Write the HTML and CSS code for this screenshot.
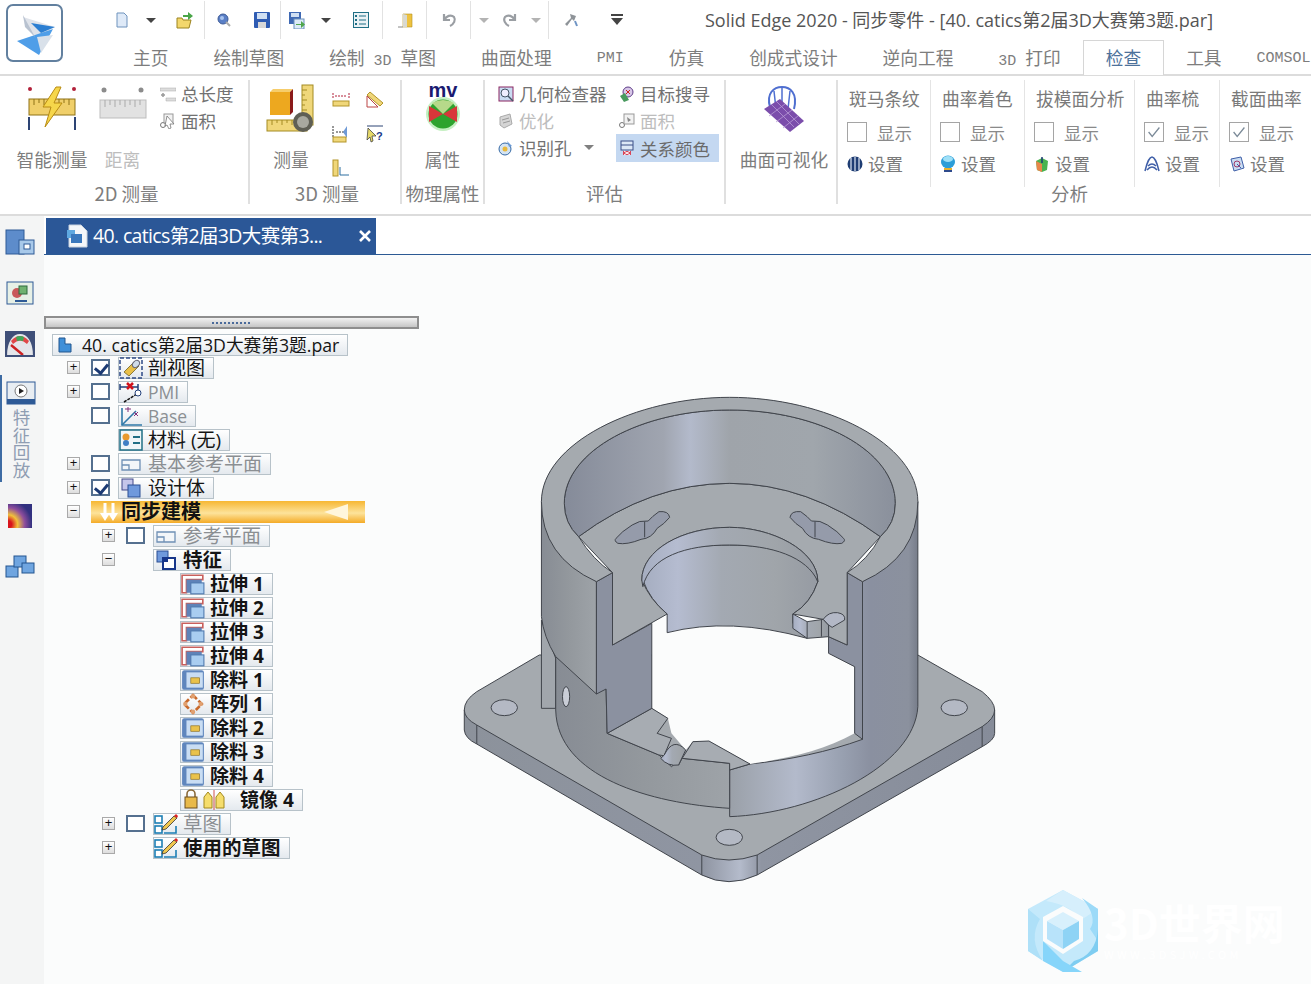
FILE: index.html
```html
<!DOCTYPE html>
<html lang="zh">
<head>
<meta charset="utf-8">
<title>Solid Edge 2020</title>
<link rel="stylesheet" href="styles.css">
</head>
<body>
<svg class="defs" width="0" height="0">
  <defs>
    <symbol id="i-doc" viewBox="0 0 16 16"><path d="M3 1h7l3 3v11H3z" fill="#dfeaf8" stroke="#6f93bd"/></symbol>
    <symbol id="i-ext" viewBox="0 0 22 20"><path d="M1 18V2h19v4H5v12z" fill="#fff" stroke="#c9605c" stroke-width="1.5"/><rect x="5" y="6" width="14" height="12" fill="#5f83b8"/><rect x="9" y="9" width="12" height="10" fill="#a9cdf0" stroke="#4f79ae"/></symbol>
    <symbol id="i-cut" viewBox="0 0 22 20"><rect x="1" y="1" width="20" height="18" rx="2" fill="#5f86bd"/><rect x="5" y="3" width="15" height="14" fill="#c9ddf3"/><rect x="9" y="8" width="8" height="5" fill="#e9c24b" stroke="#8a6d1c" stroke-width=".6"/></symbol>
    <symbol id="i-pat" viewBox="0 0 20 20"><path d="M10 2l8 8-8 8-8-8z" fill="none" stroke="#c96a2d" stroke-width="2.4" stroke-dasharray="5 2"/><circle cx="10" cy="3" r="2" fill="#e0a070"/><circle cx="10" cy="17" r="2" fill="#e0a070"/><circle cx="3" cy="10" r="2" fill="#e0a070"/><circle cx="17" cy="10" r="2" fill="#e0a070"/></symbol>
    <symbol id="i-sketch" viewBox="0 0 24 20"><rect x="1" y="2" width="7" height="7" fill="#fff" stroke="#1d7fb5" stroke-width="1.6"/><rect x="1" y="12" width="7" height="7" fill="#fff" stroke="#1d7fb5" stroke-width="1.6"/><path d="M10 19h12v-7" fill="none" stroke="#1d7fb5" stroke-width="1.6"/><path d="M9 13L20 2l3 2-11 11-4 1z" fill="#efc64e" stroke="#333" stroke-width=".8"/><path d="M20 2l3 2 1-2-2-2z" fill="#d22"/></symbol>
    <symbol id="i-plane" viewBox="0 0 24 20"><path d="M3 6h18v10H3zM3 11h7v5" fill="#f3f6f9" stroke="#6f90b5" stroke-width="1.3"/></symbol>
    <symbol id="i-body" viewBox="0 0 24 20"><rect x="3" y="1" width="11" height="11" fill="#c5c6ea" stroke="#434b8a"/><rect x="9" y="7" width="12" height="12" fill="#6f99dc" stroke="#2a4f94"/></symbol>
    <symbol id="i-tick" viewBox="0 0 20 20"><path d="M4 10l4 5 8-10" fill="none" stroke="#7b8a98" stroke-width="1.4"/></symbol>
  </defs>
</svg>

<div class="app">
  <header class="top">
    <button class="app-btn" aria-label="应用程序">
      <svg width="44" height="44" viewBox="0 0 44 44"><path d="M10 6l12 22 20-12z" fill="#dfe3ea"/><path d="M4 30l36-12-14 26z" fill="#4f9ee8"/><path d="M18 12l24 4-14 6z" fill="#2c7fd2"/><path d="M24 26l16-2-12 18z" fill="#d9e1ea"/><path d="M10 4l12 22-10-10z" fill="#b8c2d0"/></svg>
    </button>
    <div class="top-right">
      <div class="qat">
        <span class="q w30"><svg width="16" height="18"><use href="#i-doc"/></svg></span>
        <span class="q w28"><i class="drop"></i></span>
        <span class="q w40 sep"><svg width="18" height="18" viewBox="0 0 18 18"><path d="M1 7h5l1 2h8l-2 8H1z" fill="#f3d76c" stroke="#9c8420"/><path d="M7 4h5V1l5 4-5 4V6H7z" fill="#49a548"/></svg></span>
        <span class="q w38"><svg width="14" height="14" viewBox="0 0 14 14"><circle cx="6" cy="6" r="5" fill="#5a7fc6" stroke="#3c5a96"/><circle cx="5" cy="5" r="2" fill="#a8c4ef"/><path d="M9 9l4 4" stroke="#aaa" stroke-width="2"/></svg></span>
        <span class="q w38 sep"><svg width="16" height="16" viewBox="0 0 16 16"><rect width="16" height="16" rx="1" fill="#2f5cb3"/><rect x="3" y="1" width="10" height="6" fill="#cfdff3"/><rect x="4" y="10" width="8" height="6" fill="#d8d8d8"/></svg></span>
        <span class="q w32"><svg width="17" height="17" viewBox="0 0 17 17"><rect width="12" height="12" fill="#3f69b4"/><rect x="2" y="1" width="8" height="4" fill="#cfdff3"/><rect x="5" y="7" width="10" height="10" fill="#dceaf7" stroke="#6a8fbc"/><path d="M7 12h5V9l4 3.5-4 3.500V13H7z" fill="#4fa64c"/></svg></span>
        <span class="q w26"><i class="drop"></i></span>
        <span class="q w44 sep"><svg width="16" height="16" viewBox="0 0 16 16"><rect x=".5" y=".5" width="15" height="15" fill="#eaf2f5" stroke="#1f6f85"/><path d="M6 4h7M6 8h7M6 12h7" stroke="#1f6f85" stroke-width="1.2"/><path d="M2 3h2v2H2zM2 7h2v2H2zM2 11h2v2H2z" fill="#1f6f85"/></svg></span>
        <span class="q w44 sep"><svg width="16" height="16" viewBox="0 0 16 16"><path d="M1 15h5" stroke="#888"/><path d="M6 2h9v13H6z" fill="#eec23f" stroke="#b39024" stroke-width=".6"/><path d="M6 2l4 1v12H6z" fill="#d9d9d0"/></svg></span>
        <span class="q w44 sep"><svg width="16" height="16" viewBox="0 0 16 16"><path d="M3 2v6h6M3.500 8C5 4 10 2 13 5c2 3 0 7-4 9" fill="none" stroke="#9a9ea3" stroke-width="2.200"/></svg></span>
        <span class="q w26"><i class="drop pale"></i></span>
        <span class="q w26"><svg width="16" height="16" viewBox="0 0 16 16"><path d="M13 2v6H7M12.500 8C11 4 6 2 3 5c-2 3 0 7 4 9" fill="none" stroke="#9a9ea3" stroke-width="2.200"/></svg></span>
        <span class="q w26 sep"><i class="drop pale"></i></span>
        <span class="q w44"><svg width="16" height="16" viewBox="0 0 16 16"><path d="M7 2l6 2-2 5-2-2-5 7-2-2 6-6z" fill="#8e9398"/><path d="M12 9l2 5" stroke="#6f94c4" stroke-width="2"/></svg></span>
        <span class="q w48"><svg width="14" height="12" viewBox="0 0 14 12"><rect x="1" y="0" width="12" height="2" fill="#444"/><path d="M1 4h12l-6 7z" fill="#444"/></svg></span>
        <h1 class="title">Solid Edge 2020 - 同步零件 - [40. catics第2届3D大赛第3题.par]</h1>
      </div>
      <nav class="tabs">
        <a class="tab">主页</a>
        <a class="tab">绘制草图</a>
        <a class="tab">绘制<span class="m mx">3D</span>草图</a>
        <a class="tab">曲面处理</a>
        <a class="tab mono">PMI</a>
        <a class="tab">仿真</a>
        <a class="tab">创成式设计</a>
        <a class="tab">逆向工程</a>
        <a class="tab"><span class="m mr">3D</span>打印</a>
        <a class="tab active">检查</a>
        <a class="tab">工具</a>
        <a class="tab mono tight">COMSOL</a>
      </nav>
    </div>
  </header>

  <section class="ribbon">
    <div class="group g-2d">
      <div class="group-body">
        <div class="large w78">
          <svg class="big" width="50" height="48" viewBox="0 0 50 48"><circle cx="3" cy="4" r="2" fill="#b2203a"/><circle cx="47" cy="4" r="2" fill="#b2203a"/><rect x="2" y="14" width="46" height="16" fill="#f0cf6a" stroke="#8f7216"/><path d="M7 14v6M12 14v4M17 14v6M22 14v4M32 14v6M37 14v4M42 14v6" stroke="#8f7216"/><path d="M29 2L16 22h8l-6 20 17-24h-8l7-16z" fill="#f6d64a" stroke="#b88b12"/><path d="M2 32v13M48 32v13" stroke="#2d4474" stroke-width="2"/></svg>
          <span class="lbl">智能测量</span>
        </div>
        <div class="large w63 off">
          <svg class="big" width="48" height="48" viewBox="0 0 48 48"><circle cx="5" cy="5" r="2.500" fill="#8c8c8c"/><circle cx="42" cy="5" r="2.500" fill="#8c8c8c"/><rect x="1" y="15" width="46" height="18" fill="#e2e2e2" stroke="#bdbdbd"/><path d="M6 15v7M11 15v5M16 15v7M21 15v5M26 15v7M31 15v5M36 15v7M41 15v5" stroke="#aaa"/></svg>
          <span class="lbl">距离</span>
        </div>
        <div class="smalls s-len off">
          <div class="sm"><svg width="16" height="16" viewBox="0 0 16 16"><path d="M0 2h16v3H0z" fill="#ddd" stroke="#aaa" stroke-width=".5"/><path d="M1 9h4M3 7v4" stroke="#999" stroke-width="1.500"/><path d="M6 12h10v3H6z" fill="#ddd" stroke="#aaa" stroke-width=".5"/></svg>总长度</div>
          <div class="sm"><svg width="16" height="16" viewBox="0 0 16 16"><circle cx="3" cy="12" r="2.500" fill="#fff" stroke="#777"/><rect x="4" y="1" width="9" height="9" fill="#f2f2f2" stroke="#999"/><path d="M7 3l7 8h-4l1 4-2 1-2-4-2 1z" fill="#fff" stroke="#666" stroke-width=".7"/></svg>面积</div>
        </div>
      </div>
      <div class="group-lbl pl5">2D 测量</div>
    </div>

    <div class="group g-3d">
      <div class="group-body">
        <div class="large w70 lp">
          <svg class="big" width="50" height="50" viewBox="0 0 50 50"><rect x="36" y="1" width="11" height="40" fill="#f0d77a" stroke="#a48b22"/><path d="M36 6h5M36 11h3M36 16h5M36 21h3M36 26h5" stroke="#a48b22"/><rect x="1" y="36" width="40" height="11" fill="#f0d77a" stroke="#a48b22"/><path d="M6 36v5M11 36v3M16 36v5M21 36v3M26 36v5" stroke="#a48b22"/><path d="M4 8h20v23H4z" fill="#eda81f"/><path d="M4 8l3-3h20l-3 3z" fill="#f6cd6b"/><path d="M24 8l3-3v23l-3 3z" fill="#8b1a1a"/><circle cx="37" cy="38" r="10" fill="#5f5f55"/><circle cx="37" cy="38" r="6" fill="#a8a89f"/></svg>
          <span class="lbl">测量</span>
        </div>
        <div class="mini-grid">
          <svg width="18" height="18" viewBox="0 0 18 18"><path d="M1 2v5M17 2v5M3 5h12" stroke="#b2203a" stroke-dasharray="2 1"/><rect x="1" y="10" width="16" height="5" fill="#f0d77a" stroke="#b3952a"/></svg>
          <svg width="18" height="18" viewBox="0 0 18 18"><path d="M1 16V5l11 11z" fill="none" stroke="#b44"/><path d="M4 1l13 11-3 3L1 4z" fill="#f0d77a" stroke="#b3952a"/></svg>
          <svg width="18" height="18" viewBox="0 0 18 18"><path d="M1 1v11M4 7h8" stroke="#333" stroke-dasharray="2 1"/><path d="M15 1l-4 6 4 6z" fill="#6f9ad6"/><rect x="1" y="12" width="13" height="5" fill="#f0d77a" stroke="#b3952a"/></svg>
          <svg width="18" height="18" viewBox="0 0 18 18"><path d="M1 1h16" stroke="#2d4474"/><path d="M2 3l8 8-4 0 1 5-2 1-1-5-3 3z" fill="#e5d86a" stroke="#333" stroke-width=".7"/><text x="10" y="15" class="q-mark">?</text></svg>
          <svg width="18" height="18" viewBox="0 0 18 18"><rect x="1" y="1" width="5" height="16" fill="#f0d77a" stroke="#b3952a"/><path d="M8 8v8h9" fill="none" stroke="#2d6fa0"/></svg>
        </div>
      </div>
      <div class="group-lbl pl4">3D 测量</div>
    </div>

    <div class="group g-phy">
      <div class="group-body center">
        <div class="large">
          <svg class="big mvb" width="52" height="53" viewBox="0 -5 52 53"><text x="26" y="13" class="mv">mv</text><circle cx="26" cy="30" r="17" fill="#9fe59a" opacity=".6"/><circle cx="26" cy="30" r="14.500" fill="#2ea32e"/><path d="M12 22l14 8-14 8zM40 22L26 30l14 8z" fill="#d8373a"/><path d="M15 19l11 11 11-11q-11-6-22 0z" fill="#b6d98a"/></svg>
          <span class="lbl">属性</span>
        </div>
      </div>
      <div class="group-lbl">物理属性</div>
    </div>

    <div class="group g-eval">
      <div class="group-body">
        <div class="smalls s-a">
          <div class="sm"><svg width="16" height="16" viewBox="0 0 16 16"><rect x="1" y="1" width="14" height="14" fill="#c9dcf2" stroke="#8a2560"/><circle cx="7" cy="7" r="4" fill="#eef" stroke="#456"/><path d="M10 10l5 5" stroke="#456" stroke-width="1.500"/></svg>几何检查器</div>
          <div class="sm off"><svg width="16" height="16" viewBox="0 0 16 16"><path d="M2 4l10-3 2 10-8 4-4-3z" fill="#d5d5d5" stroke="#aaa"/><path d="M4 7l7-2M5 10l7-2" stroke="#999"/></svg>优化</div>
          <div class="sm"><svg width="16" height="16" viewBox="0 0 16 16"><circle cx="7" cy="9" r="6" fill="#d4e4f3" stroke="#3569a5"/><circle cx="7" cy="9" r="2.500" fill="#e8b83b"/><path d="M9 1l5 5-3 1z" fill="#6a9ad6"/></svg>识别孔<i class="drop pale mid"></i></div>
        </div>
        <div class="smalls s-b">
          <div class="sm"><svg width="16" height="16" viewBox="0 0 16 16"><circle cx="9" cy="6" r="5" fill="#d8c7e8" stroke="#5e3d88"/><path d="M7 4l4 4M11 4l-4 4" stroke="#c22"/><path d="M1 10l5-3 4 7-5 2z" fill="#4a9a5f"/></svg>目标搜寻</div>
          <div class="sm off"><svg width="16" height="16" viewBox="0 0 16 16"><circle cx="3" cy="12" r="2.500" fill="#fff" stroke="#777"/><rect x="5" y="1" width="10" height="10" fill="#f2f2f2" stroke="#999"/><path d="M8 4l4 3-3 2z" fill="#888"/></svg>面积</div>
          <div class="sm hl"><svg width="16" height="16" viewBox="0 0 16 16"><rect x="2" y="1" width="12" height="9" fill="#dce7f6" stroke="#3a4e88"/><path d="M2 5h12" stroke="#3a4e88"/><rect x="4" y="11" width="8" height="4" fill="#d9485a"/><path d="M5 11l6 4M11 11l-6 4" stroke="#fff"/></svg>关系颜色</div>
        </div>
      </div>
      <div class="group-lbl">评估</div>
    </div>

    <div class="group g-surf">
      <div class="large fill">
        <svg class="big" width="44" height="48" viewBox="0 0 44 48"><path d="M8 22C4 8 12 2 20 2s16 6 12 22" fill="none" stroke="#4f6fd0" stroke-width="2"/><path d="M20 2v18M12 6l2 18M28 6l-2 18" stroke="#4f6fd0" stroke-width="1.500"/><path d="M2 24L18 14l24 22-14 11z" fill="#7b4dab"/><path d="M9 19l23 23M14 16l23 23M7 31l16-12M14 37l16-12M21 43l15-12" stroke="#b79bd6" stroke-width=".8"/></svg>
        <span class="lbl">曲面可视化</span>
      </div>
    </div>

    <div class="group g-ana">
      <div class="ana-cols">
        <div class="ana c92"><div class="ana-h">斑马条纹</div><div class="ana-c"><i class="cb"></i>显示</div><div class="ana-s"><svg width="16" height="16" viewBox="0 0 16 16"><circle cx="8" cy="8" r="7.500" fill="#1f3d73"/><path d="M4 2v12M8 1v14M12 2v12" stroke="#dfe8f5" stroke-width="1.200"/></svg>设置</div></div>
        <div class="ana c94"><div class="ana-h">曲率着色</div><div class="ana-c"><i class="cb"></i>显示</div><div class="ana-s"><svg width="16" height="18" viewBox="0 0 16 18"><ellipse cx="8" cy="7" rx="7" ry="6.500" fill="#2c9ed8"/><ellipse cx="8" cy="4" rx="5" ry="3" fill="#9fe0f7"/><rect x="4" y="13" width="8" height="2" fill="#e8b22e"/><rect x="4" y="15" width="8" height="2" fill="#2e4a8c"/></svg>设置</div></div>
        <div class="ana c110"><div class="ana-h">拔模面分析</div><div class="ana-c"><i class="cb"></i>显示</div><div class="ana-s"><svg width="16" height="16" viewBox="0 0 16 16"><path d="M2 5l6-3 6 3-1 9-5 2-5-2z" fill="#49b34f"/><path d="M2 5l6 3v8l-5-2z" fill="#e8864a"/><path d="M8 1v6" stroke="#1b3a73" stroke-width="1.500"/></svg>设置</div></div>
        <div class="ana c85"><div class="ana-h">曲率梳</div><div class="ana-c"><i class="cb"><svg width="18" height="18"><use href="#i-tick"/></svg></i>显示</div><div class="ana-s"><svg width="16" height="16" viewBox="0 0 16 16"><path d="M1 15C3 6 6 1 8 1s5 5 7 14M4 10q4-4 8 0M3 14q5-6 10 0" fill="none" stroke="#3f5fa8" stroke-width="1.500"/></svg>设置</div></div>
        <div class="ana last"><div class="ana-h">截面曲率</div><div class="ana-c"><i class="cb"><svg width="18" height="18"><use href="#i-tick"/></svg></i>显示</div><div class="ana-s"><svg width="16" height="16" viewBox="0 0 16 16"><path d="M2 3l10-2 3 11-10 3z" fill="#c9dcf2" stroke="#3f5fa8"/><circle cx="8" cy="8" r="3" fill="none" stroke="#a03a6a"/><path d="M8 8l4 4" stroke="#3f5fa8"/></svg>设置</div></div>
      </div>
      <div class="group-lbl pr10">分析</div>
    </div>
  </section>

  <div class="workspace">
    <aside class="rail">
      <div class="rail-item"><svg width="30" height="26" viewBox="0 0 30 26"><rect x="1" y="1" width="18" height="24" fill="#5d8ccb" stroke="#2e5a96"/><rect x="14" y="11" width="15" height="14" fill="#a8c9ea" stroke="#2e5a96"/><rect x="19" y="15" width="6" height="5" fill="#fff" stroke="#2e5a96"/></svg></div>
      <div class="rail-item"><svg width="28" height="24" viewBox="0 0 28 24"><rect x="1" y="1" width="26" height="22" fill="#e7f0e6" stroke="#2e5a96"/><circle cx="11" cy="12" r="5" fill="#c85a5a"/><rect x="13" y="5" width="8" height="8" fill="#6fb26f" stroke="#2e6a3e"/><path d="M9 20h12" stroke="#2e5a96" stroke-width="2"/></svg></div>
      <div class="rail-item"><svg width="30" height="26" viewBox="0 0 30 26"><rect x="0" y="0" width="30" height="26" fill="#3f4f78"/><path d="M2 25C2 10 8 3 15 3s13 7 13 22z" fill="#e4e6ea"/><path d="M6 10q9-10 18 0l-2 3q-7-7-14 0z" fill="#e04848"/><path d="M11 6q4-2 8 0l-1 4q-3-1-6 0z" fill="#3ea858"/><path d="M6 14l12 10" stroke="#c22" stroke-width="2.400"/><path d="M0 25h30" stroke="#3f4f78" stroke-width="2"/></svg></div>
      <div class="rail-item active">
        <svg width="30" height="24" viewBox="0 0 30 24"><rect x="1" y="1" width="28" height="22" fill="#e8edf2" stroke="#2e5a96"/><rect x="1" y="18" width="28" height="5" fill="#2e5a96"/><circle cx="15" cy="10" r="6" fill="#fff" stroke="#777"/><path d="M13 7l5 3-5 3z" fill="#222"/></svg>
        <span class="vert">特征回放</span>
      </div>
      <div class="rail-item mt8"><svg width="24" height="24" viewBox="0 0 24 24"><defs><radialGradient id="heat" cx="0" cy=".85" r="1"><stop offset=".15" stop-color="#d8141c"/><stop offset=".4" stop-color="#f2c13a"/><stop offset=".7" stop-color="#8e4d9c"/><stop offset="1" stop-color="#31307f"/></radialGradient></defs><rect width="24" height="24" fill="url(#heat)"/></svg></div>
      <div class="rail-item"><svg width="30" height="24" viewBox="0 0 30 24"><g fill="#6fa5e0" stroke="#23558f"><rect x="1" y="11" width="12" height="11"/><rect x="9" y="1" width="12" height="11"/><rect x="17" y="8" width="12" height="10"/></g></svg></div>
    </aside>

    <main class="main">
      <div class="doc-tabs">
        <div class="doc-tab">
          <svg width="22" height="24" viewBox="0 0 22 24"><path d="M3 1h12l6 6v16H3z" fill="#f4f7fa" stroke="#c9d3de"/><rect x="1" y="6" width="8" height="8" fill="#5ea8e0"/><rect x="5" y="10" width="11" height="9" fill="#3a78bd"/></svg>
          <span class="doc-name">40. catics第2届3D大赛第3...</span>
          <svg class="doc-x" width="14" height="14" viewBox="0 0 14 14"><path d="M2 2l10 10M12 2L2 12" stroke="#fff" stroke-width="2.600"/></svg>
        </div>
      </div>

      <div class="canvas">
        <div class="drag"><span></span></div>

        <ul class="tree">
          <li class="row root"><span class="node"><svg width="20" height="18" viewBox="0 0 20 18"><path d="M4 2h6v6h6v8H4z" fill="#3f8fd8" stroke="#22578f"/></svg><b class="t">40. catics第2届3D大赛第3题.par</b></span></li>
          <li class="row"><i class="exp">+</i><i class="chk on"></i><span class="node"><svg width="24" height="22" viewBox="0 0 24 22"><rect x="1" y="1" width="22" height="20" fill="none" stroke="#2e4a86" stroke-dasharray="4 2" stroke-width="1.500"/><path d="M5 15L15 5l5 4-10 10z" fill="#e9bf47" stroke="#8a7a3c"/><ellipse cx="17" cy="7" rx="3" ry="4" transform="rotate(45 17 7)" fill="#cfdbe8" stroke="#667"/></svg><b class="t">剖视图</b></span></li>
          <li class="row"><i class="exp">+</i><i class="chk"></i><span class="node dim"><svg width="24" height="22" viewBox="0 0 24 22"><path d="M1 3v6M1 6h18M19 3v6" stroke="#22407a" stroke-width="1.500"/><path d="M8 2l6 6M14 2l-6 6" stroke="#d1121c" stroke-width="2.500"/><path d="M5 21l13-8" stroke="#111" stroke-dasharray="3 1" stroke-width="1.500"/><circle cx="19" cy="12" r="3" fill="#fff" stroke="#22407a"/></svg><b class="t lat">PMI</b></span></li>
          <li class="row"><i class="exp none"></i><i class="chk"></i><span class="node dim"><svg width="24" height="22" viewBox="0 0 24 22"><path d="M3 3v17h20" fill="none" stroke="#2f79a8" stroke-width="1.600"/><path d="M3 20L17 6" stroke="#2f79a8" stroke-width="1.600"/><path d="M6 4h6M9 2v5M15 7l4 4M19 7l-4 4" stroke="#80307a"/></svg><b class="t lat">Base</b></span></li>
          <li class="row"><i class="exp none"></i><i class="chk none"></i><span class="node"><svg width="24" height="22" viewBox="0 0 24 22"><rect x="1" y="1" width="22" height="20" fill="#eff6f8" stroke="#1f6f85" stroke-width="1.500"/><circle cx="7" cy="8" r="3.500" fill="#e89a2e"/><circle cx="7" cy="14" r="3" fill="#3f7fc4"/><path d="M14 8h7M14 14h7" stroke="#1f6f85" stroke-width="1.800"/></svg><b class="t">材料 (无)</b></span></li>
          <li class="row"><i class="exp">+</i><i class="chk"></i><span class="node dim"><svg width="24" height="22"><use href="#i-plane"/></svg><b class="t">基本参考平面</b></span></li>
          <li class="row"><i class="exp">+</i><i class="chk on"></i><span class="node"><svg width="24" height="22"><use href="#i-body"/></svg><b class="t">设计体</b></span></li>
          <li class="row"><i class="exp">−</i>
            <div class="sync">
              <svg width="20" height="20" viewBox="0 0 20 20"><path d="M6 1v11M14 1v11" stroke="#fff" stroke-width="3"/><path d="M1 11h10l-5 8zM9 11h10l-5 8z" fill="#fff"/></svg>
              <b class="t">同步建模</b>
              <svg class="sync-tri" width="26" height="16" viewBox="0 0 26 16"><path d="M0 8L24 0v16z" fill="#fff6dc"/></svg>
            </div>
          </li>
          <li class="row l2"><i class="exp">+</i><i class="chk"></i><span class="node dim"><svg width="24" height="22"><use href="#i-plane"/></svg><b class="t">参考平面</b></span></li>
          <li class="row l2"><i class="exp">−</i><i class="chk none"></i><span class="node bold"><svg width="24" height="22" viewBox="0 0 24 22"><rect x="3" y="2" width="11" height="11" fill="#6f99dc" stroke="#2a4f94"/><path d="M9 9h12v11H9z" fill="#fff" stroke="#17368a" stroke-width="2"/><rect x="9" y="9" width="5" height="4" fill="#17368a"/></svg><b class="t">特征</b></span></li>
          <li class="row l3"><span class="node bold"><svg width="24" height="22"><use href="#i-ext"/></svg><b class="t">拉伸 1</b></span></li>
          <li class="row l3"><span class="node bold"><svg width="24" height="22"><use href="#i-ext"/></svg><b class="t">拉伸 2</b></span></li>
          <li class="row l3"><span class="node bold"><svg width="24" height="22"><use href="#i-ext"/></svg><b class="t">拉伸 3</b></span></li>
          <li class="row l3"><span class="node bold"><svg width="24" height="22"><use href="#i-ext"/></svg><b class="t">拉伸 4</b></span></li>
          <li class="row l3"><span class="node bold"><svg width="24" height="22"><use href="#i-cut"/></svg><b class="t">除料 1</b></span></li>
          <li class="row l3"><span class="node bold"><svg width="24" height="22"><use href="#i-pat"/></svg><b class="t">阵列 1</b></span></li>
          <li class="row l3"><span class="node bold"><svg width="24" height="22"><use href="#i-cut"/></svg><b class="t">除料 2</b></span></li>
          <li class="row l3"><span class="node bold"><svg width="24" height="22"><use href="#i-cut"/></svg><b class="t">除料 3</b></span></li>
          <li class="row l3"><span class="node bold"><svg width="24" height="22"><use href="#i-cut"/></svg><b class="t">除料 4</b></span></li>
          <li class="row l3"><span class="node bold mir"><svg width="54" height="22" viewBox="0 0 54 22"><path d="M6 8V5a4 4 0 0 1 8 0v3" fill="none" stroke="#8a6a3a" stroke-width="1.600"/><rect x="4" y="8" width="12" height="11" fill="#e8b94a" stroke="#6d4f1e"/><path d="M31 19h-8V8l4-5 4 5zM35 19h8V8l-4-5-4 5z" fill="#f5dd6c" stroke="#a3891f"/><path d="M33 1v20" stroke="#d45050"/></svg><b class="t">镜像 4</b></span></li>
          <li class="row l2"><i class="exp">+</i><i class="chk"></i><span class="node dim"><svg width="24" height="22"><use href="#i-sketch"/></svg><b class="t">草图</b></span></li>
          <li class="row l2"><i class="exp">+</i><i class="chk none"></i><span class="node bold"><svg width="24" height="22"><use href="#i-sketch"/></svg><b class="t">使用的草图</b></span></li>
        </ul>

        <svg class="model" viewBox="0 0 1568 1500" preserveAspectRatio="none">
          <defs>
            <linearGradient id="wall" x1="0" x2="1" y1="0" y2="0">
              <stop offset="0" stop-color="#858b99"/><stop offset=".3" stop-color="#a0a5b0"/><stop offset=".38" stop-color="#b3bacb"/><stop offset=".5" stop-color="#9fa4aa"/><stop offset=".75" stop-color="#a0a6ac"/><stop offset="1" stop-color="#8a909c"/>
            </linearGradient>
            <linearGradient id="hole" x1="0" x2="1" y1="0" y2="0">
              <stop offset="0" stop-color="#a5adc0"/><stop offset=".2" stop-color="#b5bcd0"/><stop offset=".45" stop-color="#a3a9b2"/><stop offset=".75" stop-color="#a0a5aa"/><stop offset="1" stop-color="#969ba3"/>
            </linearGradient>
            <linearGradient id="rw" x1="0" x2="1" y1="0" y2="0">
              <stop offset="0" stop-color="#9aa0a8"/><stop offset=".35" stop-color="#b3bacb"/><stop offset=".6" stop-color="#98a0b0"/><stop offset=".75" stop-color="#8a90a0"/><stop offset=".95" stop-color="#8b919e"/><stop offset="1" stop-color="#777d8a"/>
            </linearGradient>
            <linearGradient id="lw" x1="0" x2="1" y1="0" y2="0">
              <stop offset="0" stop-color="#878c94"/><stop offset=".5" stop-color="#93989d"/><stop offset="1" stop-color="#9ea3a8"/>
            </linearGradient>
            <linearGradient id="side" x1="0" x2="1" y1="0" y2="0">
              <stop offset="0" stop-color="#8c929b"/><stop offset=".45" stop-color="#8f95a2"/><stop offset=".52" stop-color="#b4bbcb"/><stop offset=".56" stop-color="#8f95a2"/><stop offset="1" stop-color="#868c99"/>
            </linearGradient>
          </defs>
          <path class="e" fill="url(#side)" d="M40 960L40 1020Q42 1045 75 1062L705 1455Q780 1495 860 1455L1490 1070Q1525 1050 1525 1030L1525 960Z"/>
          <path class="e" fill="#a5aaaf" d="M75 905L250 795L1310 795L1490 905Q1525 935 1525 960Q1525 985 1490 1010L860 1395Q780 1425 705 1395L75 1005Q40 985 40 960Q40 930 75 905Z"/>
          <path class="e" fill="none" d="M75 1005V1062M705 1395V1455M860 1395V1455M1490 1010V1070"/>
          <ellipse class="e" cx="152" cy="953" rx="37" ry="24" fill="#b4b9c4"/>
          <ellipse class="e" cx="1412" cy="953" rx="37" ry="24" fill="#b4b9c4"/>
          <ellipse class="e" cx="782" cy="1342" rx="37" ry="24" fill="#b4b9c4"/>
          <path class="e" fill="url(#rw)" d="M1155 575Q1280 500 1310 335L1310 950C1300 1130 1020 1270 783 1280L783 1140L840 1122C950 1110 1060 1085 1155 1048Z"/>
          <path class="e" fill="#a1a6ac" d="M256 690L296 805L296 955L256 955Z"/>
          <path class="e" fill="url(#lw)" d="M296 800L437 897L440 1030L585 1095L620 1130L650 1105L783 1120L783 1255C560 1240 300 1160 296 960Z"/>
          <path class="e" fill="url(#lw)" d="M256 335L256 680Q262 740 296 800L410 912L410 575Q300 500 256 335Z"/>
          <ellipse class="e" cx="325" cy="920" rx="10" ry="30" fill="#c9cdd6"/>
          <path class="bg" d="M565 745Q680 705 800 712Q900 715 1000 745L1055 760L1060 790L1133 830L1133 1030C1050 1080 950 1105 840 1122L725 1053L680 1055L660 1080L620 1030L610 985L565 955Z"/>
          <path class="e" fill="#a7acb2" d="M440 1030L565 955L610 985L580 1030L620 1045L600 1095L640 1125L650 1105L585 1095Z"/>
          <path class="e" fill="#a7acb2" d="M680 1055L725 1053L840 1122L783 1140L783 1120L650 1105Z"/>
          <path class="e" fill="url(#hole)" d="M600 1095Q625 1040 660 1080L640 1125Q610 1130 590 1105Z"/>
          <path class="e" fill="url(#hole)" d="M540 570Q560 630 608 672L608 728Q783 680 1000 745L1000 715L960 700L960 672Q1010 640 1030 575Q1000 465 783 465Q560 465 540 570Z"/>
          <path class="e" fill="#8b91a0" d="M410 575L455 548L455 765L565 700L565 955L440 1030L437 897L410 912Z"/>
          <path class="e" fill="#8b91a0" d="M1112 548L1155 575L1155 1048L1133 1030L1133 830L1060 790L1060 740L1112 765Z"/>
          <path class="e" fill="#a5aaaf" d="M360 440Q560 280 783 280Q1000 280 1205 440L1112 548L1112 765L1060 740L1060 705L1045 688L960 672Q1010 640 1030 575C1030 480 900 412 783 412C650 412 537 480 537 570Q560 630 608 672L455 765L455 548Z"/>
          <path class="e" fill="url(#hole)" d="M537 570C537 480 650 412 783 412C900 412 1030 480 1030 575C1000 500 900 465 783 465C660 465 560 500 540 590Z"/>
          <path class="e" fill="url(#hole)" d="M960 672L1000 695L1045 688L1060 705L1060 740L1000 745L960 715Z"/>
          <path class="e" fill="#b3b8c6" d="M1045 688Q1060 665 1085 668Q1108 672 1105 690L1070 712L1060 705Z"/>
          <path class="e" fill="none" d="M1000 695V745M1040 690V740"/>
          <path class="e" fill="url(#wall)" d="M360 440Q320 400 320 340C320 180 540 60 783 60C1030 60 1247 180 1247 340Q1247 400 1205 440Q1000 280 783 280Q560 280 360 440Z"/>
          <path class="e" fill="#a5aaaf" d="M410 575Q256 500 256 335C256 160 520 22 783 22C1050 22 1310 160 1310 335Q1310 500 1155 575L1112 548Q1170 510 1205 440Q1247 400 1247 340C1247 180 1030 60 783 60C540 60 320 180 320 340Q320 400 360 440Q400 510 455 548Z"/>
          <path class="e slot" d="M465 445Q480 425 510 405Q530 390 555 393Q565 380 585 365Q612 362 615 382Q600 402 580 415Q565 445 535 448Q495 465 470 460Q458 452 465 445Z"/>
          <path class="e slot" d="M1102 445Q1087 425 1057 405Q1037 390 1012 393Q1002 380 982 365Q955 362 952 382Q967 402 987 415Q1002 445 1032 448Q1072 465 1097 460Q1109 452 1102 445Z"/>
          <path class="e" fill="none" d="M545 395V442M1022 395V442"/>
        </svg>

        <div class="watermark">
          <svg width="74" height="84" viewBox="0 0 74 84"><path d="M37 1L72 20V62L37 83L2 62V20Z" fill="#c4e9fb"/><path d="M37 1L72 20L55 31Q45 16 20 12Z" fill="#d6effc"/><path d="M56 9L72 20V52L64 40Q72 28 56 9Z" fill="#9cdaf8"/><path d="M72 40V62L37 83L48 72Q70 66 72 40Z" fill="#7fcdf1"/><path d="M2 20V62L17 72Q2 50 14 30Z" fill="#aee0f8"/><path d="M17 52L37 72L56 83L37 83L17 72Z" fill="#86d5fa"/><path d="M37 17l20 11v24L37 65 17 52V28z" fill="#fbfcfc"/><path d="M37 23l16 9-16 9-16-9z" fill="#d8f0fc"/><path d="M21 32l16 9v19l-16-10z" fill="#b8e3fa"/><path d="M53 32l-16 9v19l16-10z" fill="#8ed3f5"/></svg>
          <div class="wm-text"><div class="wm-big">3D世界网</div><div class="wm-small">WWW.3DSJW.COM</div></div>
        </div>
      </div>
    </main>
  </div>
</div>
</body>
</html>
```

FILE: styles.css
```css
* { box-sizing: border-box; }
html, body { margin: 0; padding: 0; height: 100%; overflow: hidden; }
body { background: #fff; font-family: "Noto Sans CJK SC", "Noto Sans", sans-serif; color: #777; }
i, b { font-style: normal; font-weight: inherit; }
svg { display: block; flex: none; }
.defs { position: absolute; }
.app { width: 1311px; height: 984px; display: flex; flex-direction: column; overflow: hidden; }

/* Title area */
.top { height: 76px; display: flex; border-bottom: 2px solid #dcdcdc; flex: none; }
.app-btn { width: 57px; height: 58px; margin: 4px 0 0 6px; padding: 0; border: 2px solid #62809f; border-radius: 7px; background: #fff; display: flex; align-items: center; justify-content: center; flex: none; }
.top-right { flex: 1; min-width: 0; display: flex; flex-direction: column; }
.qat { height: 40px; display: flex; align-items: center; padding-left: 44px; }
.q { height: 38px; display: flex; align-items: center; justify-content: center; flex: none; }
.sep { border-right: 1px solid #e2e2e2; }
.w26 { width: 26px; } .w28 { width: 28px; } .w30 { width: 30px; } .w32 { width: 32px; }
.w38 { width: 38px; } .w40 { width: 40px; } .w44 { width: 44px; } .w48 { width: 48px; }
.drop { display: block; width: 0; height: 0; border: 5px solid transparent; border-top: 5px solid #444; border-bottom: 0; }
.drop.pale { border-top-color: #b3b3b3; }
.drop.mid { margin-left: 7px; border-top-color: #808080; }
.title { margin: 0 0 0 64px; font: 400 18px/24px "Open Sans", "Noto Sans CJK SC", sans-serif; color: #555; letter-spacing: 0; white-space: nowrap; }
.tabs { flex: 1; display: flex; align-items: stretch; padding-left: 47.5px; }
.tab { padding: 4px 22.5px 0; font-size: 17.7px; line-height: 26px; color: #7d7d7d; white-space: nowrap; margin-bottom: -2px; }
.tab.active { background: #fff; border: 1px solid #d6d6d6; border-bottom: 0; padding: 3px 21.5px 0; color: #4d729b; height: 35px; }
.m { font-family: "Liberation Mono", monospace; font-size: 15px; }
.mx { margin: 0 9px; }
.mr { margin-right: 9px; }
.tab.mono { font-family: "Liberation Mono", monospace; font-size: 15px; padding-top: 6px; }
.tab.tight { margin-left: -10px; }

/* Ribbon */
.ribbon { height: 140px; display: flex; padding-top: 4px; border-bottom: 2px solid #dcdcdc; flex: none; font-size: 17.5px; }
.group { height: 124px; display: flex; flex-direction: column; border-right: 2px solid #e0e0e0; flex: none; }
.g-2d { width: 250px; } .g-3d { width: 152px; } .g-phy { width: 83px; } .g-eval { width: 241px; } .g-surf { width: 112px; }
.g-ana { width: 473px; border-right: 0; }
.group-body { flex: 1; display: flex; min-height: 0; }
.group-body.center { justify-content: center; }
.group-lbl { height: 22px; line-height: 22px; text-align: center; font-size: 18.5px; color: #7d7d7d; flex: none; }
.pl5 { padding-left: 5px; } .pl4 { padding-left: 4px; } .pr10 { padding-right: 10px; }
.large { display: flex; flex-direction: column; align-items: center; font-size: 17.7px; color: #7d7d7d; }
.large.fill { width: 100%; padding-left: 6px; }
.big { margin-top: 4px; height: 50px; }
.big.mvb { margin-top: -1px; margin-bottom: 2px; height: 53px; }
.lbl { margin-top: 13px; line-height: 24px; white-space: nowrap; }
.w78 { width: 78px; margin-left: 13px; } .w63 { width: 63px; }
.lp { margin-left: 16px; }
.off, .off .lbl { color: #bdbdbd; }
.smalls { display: flex; flex-direction: column; }
.s-len { margin-left: 6px; }
.s-a { margin-left: 13px; width: 121px; }
.s-b { margin-left: 0; }
.sm { height: 27px; display: flex; align-items: center; gap: 5px; white-space: nowrap; color: #727272; padding-left: 0; }
.sm.off { color: #bdbdbd; }
.sm.hl { background: #c4d8f1; width: 103px; margin-left: -3px; padding-left: 3px; height: 28px; color: #6a6a6a; }
.mini-grid { display: grid; grid-template-columns: 34px 34px; grid-auto-rows: 34px; margin: 3px 0 0 8px; justify-items: center; align-items: center; }
.q-mark { font: 700 11px "Liberation Sans", sans-serif; fill: #1a3a8a; }
.mv { font: 700 20px "Liberation Sans", sans-serif; fill: #1a1a70; text-anchor: middle; }

/* Analysis columns */
.ana-cols { display: flex; flex: 1; min-height: 0; }
.ana { padding-left: 9px; height: 107px; border-right: 1px solid #e4e4e4; display: flex; flex-direction: column; color: #7a7a7a; flex: none; }
.ana.last { border-right: 0; }
.c92 { width: 93px; } .c94 { width: 94px; } .c110 { width: 110px; } .c85 { width: 85px; }
.ana-h { height: 35px; display: flex; align-items: center; margin-left: 2px; white-space: nowrap; font-size: 17.7px; }
.ana-c { height: 34px; display: flex; align-items: center; gap: 10px; color: #8a8a8a; }
.ana-s { height: 29px; display: flex; align-items: center; gap: 5px; }
.cb { display: block; width: 20px; height: 20px; border: 1px solid #a5a5a5; background: #fff; }

/* Workspace */
.workspace { flex: 1; display: flex; min-height: 0; }
.rail { width: 44px; background: #f4f5f5; flex: none; display: flex; flex-direction: column; }
.rail-item { height: 51px; display: flex; align-items: center; justify-content: center; flex: none; padding-right: 4px; }
.rail-item.active { height: 107px; margin-top: 6px; flex-direction: column; justify-content: flex-start; padding: 6px 2px 0 0; border-left: 2px solid #3d6ba3; margin-right: 2px; gap: 4px; }
.mt8 { margin-top: 8px; }
.vert { writing-mode: vertical-rl; font-size: 17.5px; line-height: 20px; color: #8f9db2; }

.main { flex: 1; display: flex; flex-direction: column; min-width: 0; background: #fbfcfc; }
.doc-tabs { height: 39px; background: #fff; border-bottom: 1px solid #2c5a94; padding: 2px 0 0 2px; flex: none; }
.doc-tab { width: 330px; height: 36px; background: #2b5797; display: flex; align-items: center; padding-left: 20px; color: #fff; position: relative; }
.doc-name { margin-left: 5px; font: 400 19.5px/24px "Open Sans", "Noto Sans CJK SC", sans-serif; letter-spacing: -.65px; white-space: nowrap; }
.doc-x { margin-left: auto; margin-right: 4px; }

.canvas { flex: 1; position: relative; padding-top: 61px; min-height: 0; }
.drag { width: 375px; height: 13px; border: 2px solid #8e8e8e; background: linear-gradient(#f2f2f2, #c6c6c6); display: flex; align-items: center; justify-content: center; }
.drag span { width: 40px; height: 2px; background: repeating-linear-gradient(90deg, #4a6a9a 0 2px, transparent 2px 4px); }

/* Tree */
.tree { list-style: none; margin: 5px 0 0; padding: 0 0 0 8px; font: 400 19px/22px "Open Sans", "Noto Sans CJK SC", sans-serif; color: #151515; }
.row { height: 24px; display: flex; align-items: flex-start; padding-left: 15px; position: relative; }
.row.root { padding-left: 0; height: 23px; }
.row.l2 { padding-left: 50px; font-size: 19.5px; }
.row.l3 { padding-left: 128px; }
.exp { width: 13px; height: 13px; margin: 4px 11px 0 0; border: 1px solid #a9a9a9; background: linear-gradient(#fff, #ddd); font: 400 13px/10px "Liberation Sans", sans-serif; text-align: center; color: #111; flex: none; }
.exp.none { visibility: hidden; }
.chk { width: 19px; height: 17px; margin: 2px 8px 0 0; border: 2px solid #55708f; background: #fff; flex: none; position: relative; }
.chk.none { visibility: hidden; }
.chk.on::after { content: ""; position: absolute; left: 4px; top: 0; width: 6px; height: 10px; border: solid #1b3a73; border-width: 0 3px 3px 0; transform: rotate(40deg); }
.node { height: 22px; display: inline-flex; align-items: center; border: 1px solid #b7c2c9; background: linear-gradient(#fff, #e4e9ee); padding-right: 8px; white-space: nowrap; }
.node .t { margin-left: 5px; }
.node .t.lat { font-size: 17.5px; }
.root .t { margin-left: 7px; font-size: 17.7px; }
.root .node { padding-left: 2px; padding-right: 8px; }
.node.dim { color: #8b8f93; }
.node.bold .t { font-weight: 700; }
.sync { width: 274px; height: 22px; display: flex; align-items: center; background: linear-gradient(#f7b733, #fde39b 55%, #f4ab27); padding-left: 8px; color: #111; font-weight: 700; font-size: 20px; }
.sync .t { margin-left: 2px; }
.sync-tri { margin-left: auto; margin-right: 15px; }

/* 3D viewport */
.model { position: absolute; left: 406px; top: 135px; width: 560px; height: 500px; overflow: visible; }
.e { stroke: #41454c; stroke-width: 1; vector-effect: non-scaling-stroke; stroke-linejoin: round; }
.bg { fill: #fbfcfc; }
.slot { fill: #959baa; }

.watermark { position: absolute; left: 982px; top: 634px; display: flex; gap: 4px; }
.wm-text { padding-top: 12px; color: #fff; font-family: "Noto Sans CJK SC", sans-serif; }
.wm-big { font-size: 42px; line-height: 42px; font-weight: 700; white-space: nowrap; }
.wm-small { font-size: 11px; line-height: 14px; letter-spacing: 3.4px; white-space: nowrap; margin-top: 4px; }
```
